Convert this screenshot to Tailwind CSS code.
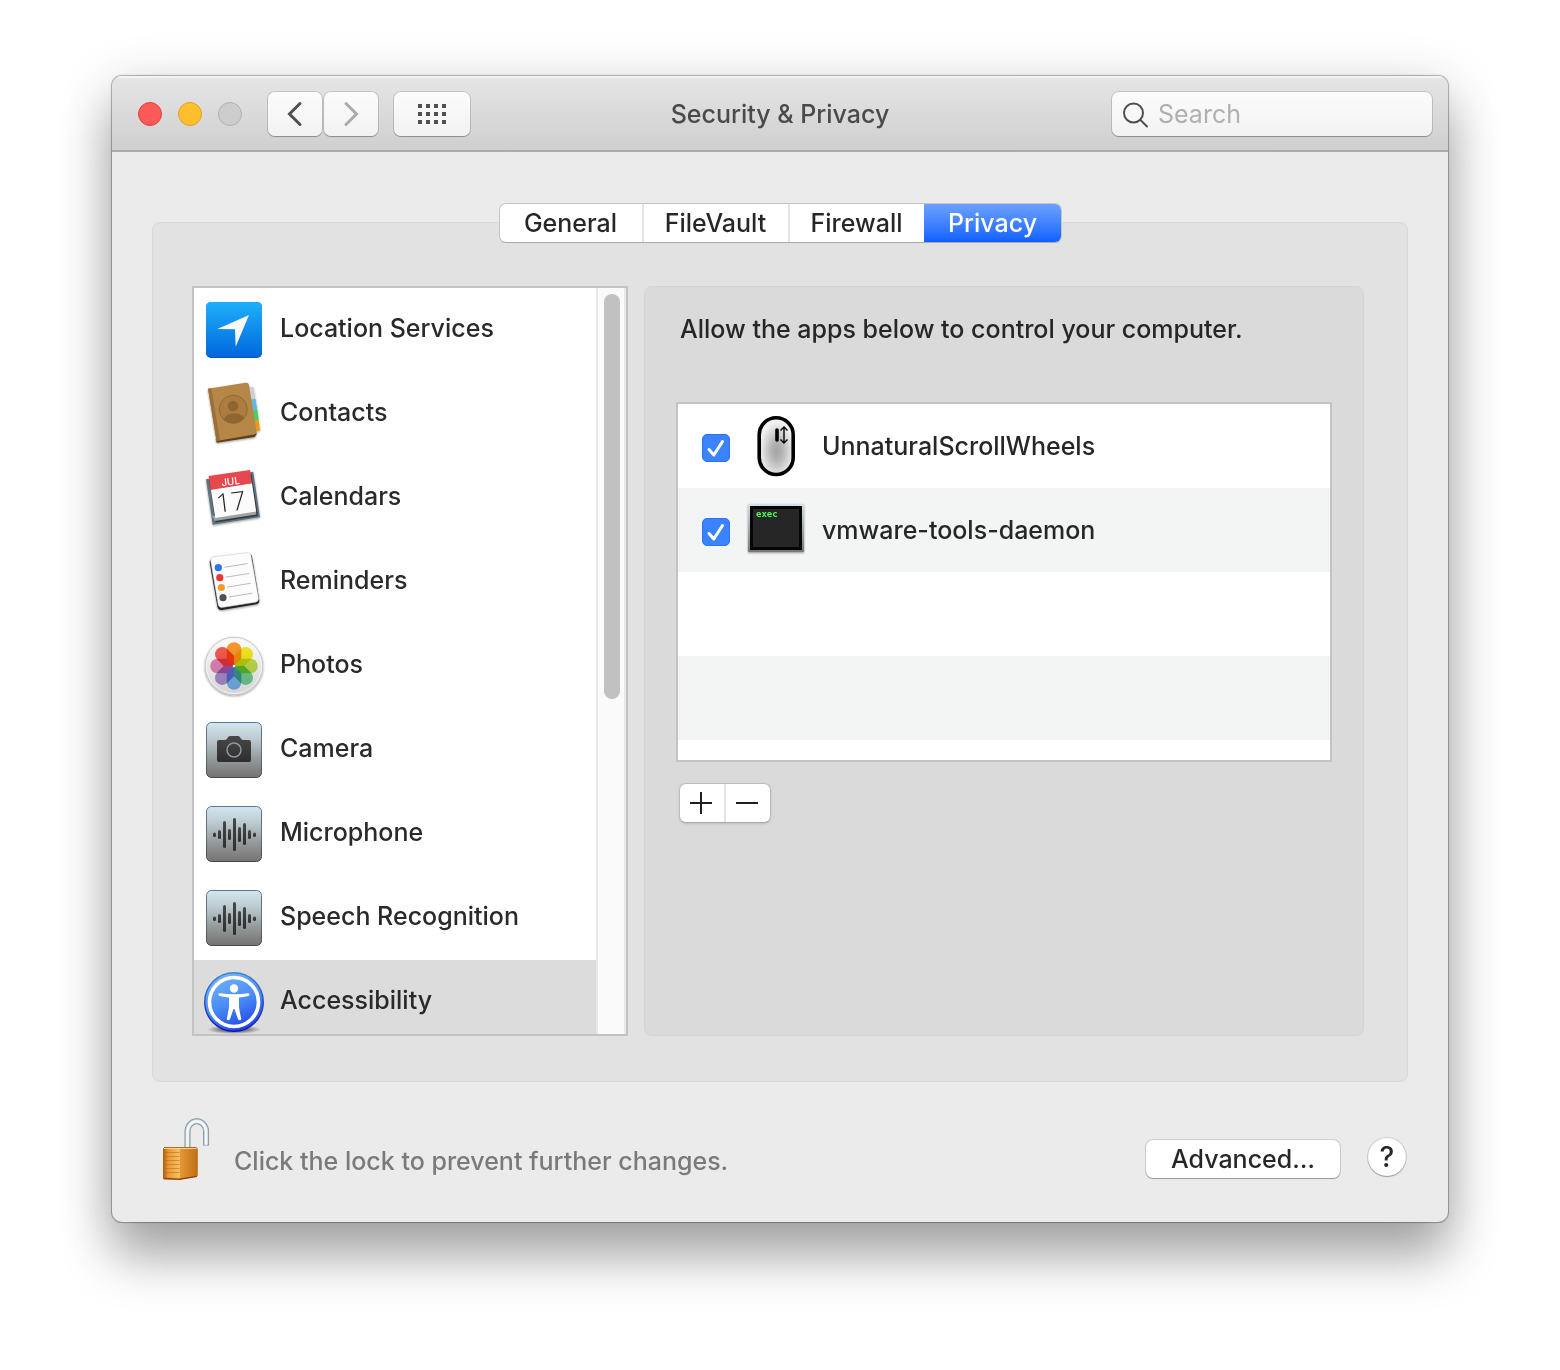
<!DOCTYPE html>
<html lang="en">
<head>
<meta charset="utf-8">
<meta name="viewport" content="width=device-width, initial-scale=1">
<title>Security &amp; Privacy</title>
<script src="https://cdn.jsdelivr.net/npm/@tailwindcss/browser@4"></script>
</head>
<body class="min-h-screen bg-white px-28 pt-[76px] pb-[148px] font-['Inter',sans-serif] text-[25px] leading-8 font-[450] text-[#262626]">

<!-- Gradients shared by several icons -->
<svg class="absolute size-0" aria-hidden="true">
  <defs>
    <linearGradient id="tile" x1="0" y1="0" x2="0" y2="1"><stop offset="0" stop-color="#d3e6ee"/><stop offset=".3" stop-color="#bccbd1"/><stop offset=".65" stop-color="#959b9d"/><stop offset="1" stop-color="#757373"/></linearGradient>
    <linearGradient id="tileEdge" x1="0" y1="0" x2="0" y2="1"><stop offset="0" stop-color="#56759b"/><stop offset=".5" stop-color="#667078"/><stop offset="1" stop-color="#484646"/></linearGradient>
    <linearGradient id="glyph" x1="0" y1="0" x2="0" y2="1"><stop offset="0" stop-color="#484848"/><stop offset="1" stop-color="#2e2e2e"/></linearGradient>
    <filter id="soft" x="-20%" y="-20%" width="140%" height="150%"><feDropShadow dx="0" dy="1" stdDeviation="1" flood-opacity=".4"/></filter>
    <path id="petal" d="M0 0-7.300-7.300V-16.500a7.300 7.300 0 0 1 14.600 0V-7.300z"/>
    <g id="wave">
      <rect x="2.500" y="2.500" width="55" height="55" rx="5" fill="url(#tile)" stroke="url(#tileEdge)"/>
      <g fill="url(#glyph)">
        <rect x="9" y="28.500" width="3" height="4.500" rx="1.500"/><rect x="14" y="26" width="3" height="9" rx="1.500"/><rect x="19" y="17" width="3" height="27" rx="1.500"/><rect x="24" y="25" width="3" height="11" rx="1.500"/><rect x="29" y="14" width="3" height="33" rx="1.500"/><rect x="34" y="23" width="3" height="15" rx="1.500"/><rect x="39" y="19" width="3" height="22" rx="1.500"/><rect x="44" y="26" width="3" height="9" rx="1.500"/><rect x="49" y="28.500" width="3" height="4.500" rx="1.500"/>
      </g>
    </g>
  </defs>
</svg>

<div class="overflow-hidden rounded-[10px] bg-[#ebebeb] shadow-[0_0_1px_1px_rgba(0,0,0,0.3),0_38px_50px_rgba(0,0,0,0.26),0_12px_56px_rgba(0,0,0,0.2)]">

  <header class="grid h-[76px] grid-cols-[1fr_auto_1fr] items-center border-b-2 border-[#ababab] bg-linear-to-b from-[#e6e6e6] to-[#cfcfcf] px-4 pt-0.5 shadow-[inset_0_2px_0_#f3f3f3]">
    <div class="flex items-center pl-2.5">
      <div class="flex gap-4">
        <button aria-label="Close" class="size-6 rounded-full border border-[#e0403f] bg-[#fd5956]"></button>
        <button aria-label="Minimize" class="size-6 rounded-full border border-[#e2a01f] bg-[#fdbf2e]"></button>
        <button aria-label="Zoom" disabled class="size-6 rounded-full border border-[#b0b0b0] bg-[#cdcdcd]"></button>
      </div>
      <div class="ml-[26px] flex gap-0.5">
        <button aria-label="Back" class="flex h-11 w-[54px] items-center justify-center rounded-[7px] bg-linear-to-b from-[#fcfcfc] to-[#f2f2f2] shadow-[0_0_0_1px_rgba(0,0,0,0.12),0_1px_1px_rgba(0,0,0,0.25)]">
          <svg class="h-7 w-4" viewBox="0 0 16 28" fill="none" stroke="#505050" stroke-width="3" stroke-linecap="round"><path d="M13 3.500 2.500 14 13 24.500"/></svg>
        </button>
        <button aria-label="Forward" disabled class="flex h-11 w-[54px] items-center justify-center rounded-[7px] bg-linear-to-b from-[#fcfcfc] to-[#f2f2f2] shadow-[0_0_0_1px_rgba(0,0,0,0.12),0_1px_1px_rgba(0,0,0,0.25)]">
          <svg class="h-7 w-4" viewBox="0 0 16 28" fill="none" stroke="#ababab" stroke-width="3" stroke-linecap="round"><path d="M3 3.500 13.500 14 3 24.500"/></svg>
        </button>
      </div>
      <button aria-label="Show all" class="ml-4 flex h-11 w-[76px] items-center justify-center rounded-[7px] bg-linear-to-b from-[#fcfcfc] to-[#f2f2f2] shadow-[0_0_0_1px_rgba(0,0,0,0.12),0_1px_1px_rgba(0,0,0,0.25)]">
        <svg class="h-5 w-7" viewBox="0 0 28 20" fill="none" stroke="#505050" stroke-width="4" stroke-dasharray="4 4"><path d="M0 2h28M0 10h28M0 18h28"/></svg>
      </button>
    </div>
    <h1 class="text-[#4a4a4a]">Security &amp; Privacy</h1>
    <label class="flex h-11 w-80 items-center gap-2 justify-self-end rounded-[7px] bg-linear-to-b from-[#fcfcfc] to-[#f2f2f2] pl-2.5 shadow-[0_0_0_1px_rgba(0,0,0,0.12),0_1px_1px_rgba(0,0,0,0.25)]">
      <svg class="size-7 shrink-0" viewBox="0 0 28 28" fill="none" stroke="#505050" stroke-width="2" stroke-linecap="round"><circle cx="11.500" cy="13" r="9.500"/><path d="m18.500 20 6.500 6.500"/></svg>
      <input type="search" aria-label="Search" placeholder="Search" class="min-w-0 flex-1 bg-transparent font-normal outline-none placeholder:text-[#b0b0b0]">
    </label>
  </header>

  <main class="px-10 pt-[51px]">
    <div role="tablist" class="relative mx-auto -mb-[21px] flex h-10 w-fit overflow-hidden rounded-[7px] border border-[#c4c4c4] border-b-[#a9a9a9] bg-white text-black/85">
      <button role="tab" class="w-[142px]">General</button>
      <button role="tab" class="w-[148px] border-x-2 border-[#e4e4e4]">FileVault</button>
      <button role="tab" class="w-[134px]">Firewall</button>
      <button role="tab" aria-selected="true" class="-my-px -mr-px w-[138px] bg-linear-to-b from-[#6ea2fd] to-[#0a5dff] text-white">Privacy</button>
    </div>

    <section class="flex gap-4 rounded-lg border border-[#d8d8d8] bg-[#e2e2e2] pt-[63px] pr-[43px] pb-[45px] pl-[39px]">

      <div class="flex h-[750px] w-[436px] shrink-0 overflow-hidden border-2 border-[#c3c3c3] bg-white text-[#2a2a2a]">
        <ul class="flex-1">
          <li><button class="flex h-[84px] w-full items-center gap-4 pl-2.5 text-left">
            <svg class="size-[60px]" viewBox="0 0 60 60">
              <defs><linearGradient id="loc" x1="0" y1="0" x2="0" y2="1"><stop offset="0" stop-color="#1fb0fa"/><stop offset="1" stop-color="#0067dc"/></linearGradient></defs>
              <rect x="2" y="2" width="56" height="56" rx="5" fill="#0a53b8"/><rect x="2" y="2" width="56" height="55" rx="5" fill="url(#loc)"/>
              <path d="M45 15 13.300 29l17.700.300.700 17.400z" fill="#f7f9fb"/>
            </svg>
            <span class="pb-1">Location Services</span></button></li>
          <li><button class="flex h-[84px] w-full items-center gap-4 pl-2.5 text-left">
            <svg class="size-[60px] overflow-visible" viewBox="0 0 60 60">
              <g filter="url(#soft)">
                <path d="M44 3h5.500l2 13-6 1z" fill="#cfcfcf"/><path d="m46 15.500 5.500-.8 1.800 11-6 1z" fill="#62b8e4"/><path d="m48 26.500 5.300-.8 1.500 10.500-5.500 1z" fill="#4fcb63"/><path d="m49 37 5.800-.8L56 46.500l-5 1z" fill="#e79c13"/>
                <path d="m12.700 58.700 38-5.700 2-3-1-3-40 8z" fill="#5d3f1b"/>
                <path d="M4 4.700 41.500-1.300q3-.300 3.500 2.300l7.500 46q.400 3-2.500 3.500L12.500 57z" fill="#b48748"/>
                <path d="m4 4.700 3.300-.5L16 56.500l-3.500.500z" fill="#9b7037"/>
              </g>
              <circle cx="29.300" cy="25.300" r="14" fill="#ab7d40" stroke="#936832"/>
              <circle cx="29" cy="22" r="5.300" fill="#8f6530"/><path d="M19.500 35.500q4-6.500 11-6.200 6.500.200 9.500 4.500-4.500 5.500-10.500 5.500-6 0-10-3.800z" fill="#8f6530"/>
            </svg>
            <span class="pb-1">Contacts</span></button></li>
          <li><button class="flex h-[84px] w-full items-center gap-4 pl-2.5 text-left">
            <svg class="size-[60px] overflow-visible" viewBox="0 0 60 60">
              <g filter="url(#soft)">
                <path d="M2 11.300 49.300 3.700 56 49.300 8.700 56.700z" fill="#5f7380"/>
                <path d="m5 12 6.500 42.500L54 48 47.500 6z" fill="#303a3f"/>
                <path d="m8 48 3 5 41.500-6.500-1-5z" fill="#9fa3a0"/>
                <path d="M6.700 21 48 15l4.200 28.500L11.300 50z" fill="#fbfbfb"/>
                <path d="M4.700 8 46 2l2 13.300L6.700 22z" fill="#e5484d"/>
              </g>
              <text x="27" y="17" text-anchor="middle" transform="rotate(-7 27 17)" font-size="10" fill="#fff">JUL</text>
              <text x="28" y="43" text-anchor="middle" transform="rotate(-7 28 43)" font-size="26" font-family="Open Sans, sans-serif" font-weight="300" fill="#222">17</text>
            </svg>
            <span class="pb-1">Calendars</span></button></li>
          <li><button class="flex h-[84px] w-full items-center gap-4 pl-2.5 text-left">
            <svg class="size-[60px] overflow-visible" viewBox="0 0 60 60">
              <g filter="url(#soft)">
                <path d="M9 6.500 44 1.700q3.500-.300 4 3l7.300 43.600q.300 3.200-3 4L18 58q-3.500.500-4.500-3L5.800 11q-.500-3.500 3.200-4.500z" fill="#222"/>
                <path d="M9.500 4.800 43.500.7q3-.200 3.500 2.800L54.500 46q.500 3.500-3 4.200L18 55.500q-3 .300-3.800-2.700L6.700 9q-.300-3.500 2.800-4.200z" fill="#fcfcfc" stroke="#ccc" stroke-width=".5"/>
              </g>
              <g stroke="#bdbdbd"><path d="m20.300 15.300 23.400-3.800M21.800 25.200l23.400-3.800M23.300 35.100l23.400-3.800M25 45l23.400-3.800"/></g>
              <circle cx="14.300" cy="15.700" r="3.600" fill="#2d72fb"/><circle cx="15.800" cy="25.700" r="3.600" fill="#ee3434"/><circle cx="17.300" cy="35.500" r="3.600" fill="#f49a2d"/><circle cx="19" cy="45.700" r="3.600" fill="#4a535c"/>
            </svg>
            <span class="pb-1">Reminders</span></button></li>
          <li><button class="flex h-[84px] w-full items-center gap-4 pl-2.5 text-left">
            <svg class="size-[60px] overflow-visible" viewBox="0 0 60 60">
              <defs><linearGradient id="disc" x1="0" y1="0" x2="0" y2="1"><stop offset="0" stop-color="#fdfdfd"/><stop offset="1" stop-color="#d4d4d4"/></linearGradient></defs>
              <circle cx="30" cy="30" r="28.800" fill="url(#disc)" stroke="#c8c8c8" filter="url(#soft)"/>
              <circle cx="30" cy="30" r="27.500" fill="none" stroke="#f4f4f4"/>
              <g transform="translate(30 30)">
                <use href="#petal" class="mix-blend-multiply" fill="#f99c2d"/>
                <use href="#petal" class="mix-blend-multiply" transform="rotate(45)" fill="#f8ea20"/>
                <use href="#petal" class="mix-blend-multiply" transform="rotate(90)" fill="#c0e04e"/>
                <use href="#petal" class="mix-blend-multiply" transform="rotate(135)" fill="#74d295"/>
                <use href="#petal" class="mix-blend-multiply" transform="rotate(180)" fill="#7ab8f2"/>
                <use href="#petal" class="mix-blend-multiply" transform="rotate(225)" fill="#ae92d6"/>
                <use href="#petal" class="mix-blend-multiply" transform="rotate(270)" fill="#e487bc"/>
                <use href="#petal" class="mix-blend-multiply" transform="rotate(315)" fill="#fa5c50"/>
                <circle r="1.300" fill="#fff"/>
              </g>
            </svg>
            <span class="pb-1">Photos</span></button></li>
          <li><button class="flex h-[84px] w-full items-center gap-4 pl-2.5 text-left">
            <svg class="size-[60px]" viewBox="0 0 60 60">
              <rect x="2.500" y="2.500" width="55" height="55" rx="5" fill="url(#tile)" stroke="url(#tileEdge)"/>
              <path d="M15 20h6q1.500 0 2.500-2 1-2 2.500-2h8q1.500 0 2.500 2t2.500 2h6q2 0 2 2v18q0 2-2 2H15q-2 0-2-2V22q0-2 2-2z" fill="url(#glyph)"/>
              <circle cx="30" cy="30" r="7" fill="none" stroke="#90999d" stroke-width="1.500"/>
            </svg>
            <span class="pb-1">Camera</span></button></li>
          <li><button class="flex h-[84px] w-full items-center gap-4 pl-2.5 text-left">
            <svg class="size-[60px]" viewBox="0 0 60 60"><use href="#wave"/></svg>
            <span class="pb-1">Microphone</span></button></li>
          <li><button class="flex h-[84px] w-full items-center gap-4 pl-2.5 text-left">
            <svg class="size-[60px]" viewBox="0 0 60 60"><use href="#wave"/></svg>
            <span class="pb-1">Speech Recognition</span></button></li>
          <li><button aria-current="true" class="flex h-[84px] w-full items-center gap-4 bg-[#dcdcdc] pl-2.5 text-left">
            <svg class="size-[60px] overflow-visible" viewBox="0 0 60 60">
              <defs><linearGradient id="acc" x1=".3" y1="0" x2=".7" y2="1"><stop offset="0" stop-color="#72b6fb"/><stop offset=".5" stop-color="#4a8cf6"/><stop offset="1" stop-color="#1c3fe4"/></linearGradient>
              <linearGradient id="accEdge" x1="0" y1="0" x2="0" y2="1"><stop offset="0" stop-color="#3f88c8"/><stop offset="1" stop-color="#1212b8"/></linearGradient>
              <radialGradient id="accShade"><stop offset=".5" stop-color="#555" stop-opacity=".7"/><stop offset="1" stop-color="#555" stop-opacity="0"/></radialGradient></defs>
              <ellipse cx="30" cy="57.500" rx="27" ry="4.500" fill="url(#accShade)"/>
              <circle cx="30" cy="30" r="29.300" fill="url(#acc)" stroke="url(#accEdge)" stroke-width="1.400"/>
              <circle cx="30" cy="30" r="24.500" fill="none" stroke="#fff" stroke-width="3.600"/>
              <circle cx="30" cy="16.500" r="4.200" fill="#fff"/>
              <path d="M16 21.200q14 2 28 0 1.500 0 1.500 1.300T44.200 24q-5 1-9.200 1.500v8.500q0 3 2.200 12.500.200 1.500-1.200 1.800t-2-1.300L30.500 37h-1L26 47q-.600 1.600-2 1.300t-1.200-1.800Q25 37 25 34v-8.500Q20.800 25 15.800 24q-1.300-.300-1.300-1.500T16 21.200z" fill="#fff"/>
            </svg>
            <span class="pb-1">Accessibility</span></button></li>
        </ul>
        <div class="w-[30px] border-x-2 border-[#e8e8e8] bg-[#fafafa] py-1.5 pl-1.5">
          <div class="h-[405px] w-4 rounded-full bg-[#c1c1c1]"></div>
        </div>
      </div>

      <div class="min-w-0 flex-1 rounded-lg border border-[#d4d4d4] bg-[#dadada] px-[31px] pt-[26px]">
        <p class="pl-1">Allow the apps below to control your computer.</p>
        <div class="mt-[57px] h-[360px] overflow-hidden border-2 border-[#c3c3c3] bg-white">
          <table class="w-full border-collapse" aria-label="Allowed apps">
            <tbody>
              <tr class="h-[84px]">
                <td class="w-[52px] p-0 pl-6"><input id="app-scroll" type="checkbox" checked class="peer sr-only"><label for="app-scroll" aria-label="Allow UnnaturalScrollWheels" class="mt-1 flex size-7 items-center justify-center rounded-[5px] border border-[#2f72f5] bg-[#3b82fd]"><svg class="size-6" viewBox="0 0 24 24" fill="none" stroke="#fff" stroke-width="3" stroke-linecap="round" stroke-linejoin="round"><path d="m5 13.500 4.800 5.500L18.500 5.500"/></svg></label></td>
                <td class="w-[92px] p-0 pl-4">
                  <svg class="size-[60px] overflow-visible" viewBox="0 0 60 60">
                    <defs><radialGradient id="mouse" cx=".52" cy=".58" r=".5"><stop offset="0" stop-color="#a4a4a4"/><stop offset=".35" stop-color="#b5b5b5"/><stop offset="1" stop-color="#f1f1f1"/></radialGradient></defs>
                    <rect x="13.200" y="1.800" width="34" height="56.700" rx="17" fill="url(#mouse)" stroke="#000" stroke-width="3.600"/>
                    <path d="M31 14v10" stroke="#000" stroke-width="3.600" stroke-linecap="round"/>
                    <path d="M38 11.500v15m-3.500-12L38 11l3.500 3.500m-7 9L38 27l3.500-3.500" fill="none" stroke="#000" stroke-width="1.400"/>
                  </svg></td>
                <td class="p-0">UnnaturalScrollWheels</td>
              </tr>
              <tr class="h-[84px] bg-[#f3f5f4]">
                <td class="p-0 pl-6"><input id="app-vmware" type="checkbox" checked class="peer sr-only"><label for="app-vmware" aria-label="Allow vmware-tools-daemon" class="mt-1 flex size-7 items-center justify-center rounded-[5px] border border-[#2f72f5] bg-[#3b82fd]"><svg class="size-6" viewBox="0 0 24 24" fill="none" stroke="#fff" stroke-width="3" stroke-linecap="round" stroke-linejoin="round"><path d="m5 13.500 4.800 5.500L18.500 5.500"/></svg></label></td>
                <td class="p-0 pl-4">
                  <svg class="size-[60px] overflow-visible" viewBox="0 0 60 60">
                    <defs><linearGradient id="term" x1="0" y1="0" x2="0" y2="1"><stop offset="0" stop-color="#cfe3ea"/><stop offset="1" stop-color="#777"/></linearGradient></defs>
                    <rect x="2" y="4" width="56" height="48" rx="1" fill="url(#term)" filter="url(#soft)"/>
                    <path d="M4 6h52v44H4z" fill="#060606"/><path d="M7 9h46v38H7z" fill="#262626"/>
                    <text x="10" y="17" font-family="DejaVu Sans Mono, monospace" font-size="9" font-weight="700" fill="#4dfb55">exec</text>
                  </svg></td>
                <td class="p-0">vmware-tools-daemon</td>
              </tr>
              <tr class="h-[84px]"><td colspan="3"></td></tr>
              <tr class="h-[84px] bg-[#f3f5f4]"><td colspan="3"></td></tr>
            </tbody>
          </table>
        </div>
        <div class="mt-[21px] ml-[3px] flex h-10 w-fit overflow-hidden rounded-[7px] border border-[#bdbdbd] border-b-[#a9a9a9] bg-white shadow-sm">
          <button aria-label="Add" class="flex w-11 items-center justify-center"><svg class="size-6" viewBox="0 0 24 24" stroke="#1f1f1f" stroke-width="2"><path d="M0 12h22M11 1v22"/></svg></button>
          <button aria-label="Remove" class="flex w-[46px] items-center justify-center border-l-2 border-[#e4e4e4]"><svg class="size-6" viewBox="0 0 24 24" stroke="#1f1f1f" stroke-width="2"><path d="M0 12h22"/></svg></button>
        </div>
      </div>
    </section>
  </main>

  <footer class="flex items-start pt-9 pr-[42px] pb-10 pl-[50px]">
    <button aria-label="Lock">
      <svg class="h-16 w-12" viewBox="0 0 48 64">
        <defs>
          <linearGradient id="brassL" x1="0" y1="0" x2="1" y2="0"><stop offset="0" stop-color="#a85a10"/><stop offset=".3" stop-color="#e8952f"/><stop offset="1" stop-color="#fbc263"/></linearGradient>
          <linearGradient id="brassR" x1="0" y1="0" x2="1" y2="0"><stop offset="0" stop-color="#e89a36"/><stop offset="1" stop-color="#bd6f14"/></linearGradient>
        </defs>
        <path d="M25.500 31V13.500a9.300 10.200 0 0 1 18.600 0v14" fill="none" stroke="#82929b" stroke-width="6"/>
        <path d="M25.500 31V13.500a9.300 10.200 0 0 1 18.600 0v13.200" fill="none" stroke="#b9c8cf" stroke-width="4.400"/>
        <path d="M25.500 31V13.500a9.300 10.200 0 0 1 18.600 0v13.200" fill="none" stroke="#f4f9fa" stroke-width="2.600"/>
        <path d="M1 31q0-1.500 2-1.500h14.500v32.200L3 61.200q-2 0-2-1.500z" fill="url(#brassL)"/>
        <path d="M17.500 29.500H34q1.800 0 1.800 1.500v26q0 1.500-1.800 1.800l-16.500 2.900z" fill="url(#brassR)"/>
        <path d="M1 34.500h16.500M1 38.500h16.500M1 42.500h16.500M1 46.500h16.500M1 50.500h16.500M1 54.500h16.500" stroke="#b8691a" opacity=".55"/>
        <path d="M2 30.500h32.500" stroke="#ffd58c"/>
        <path d="M2 29.500h32.500" stroke="#8e5516" stroke-width=".8"/>
        <path d="m1.500 60.500 16 .7 17.500-2.800" fill="none" stroke="#8f450c" stroke-width="1.400"/>
      </svg>
    </button>
    <p class="mt-[27px] ml-6 text-[#7a7a7a]">Click the lock to prevent further changes.</p>
    <button class="mt-[22px] ml-auto flex h-[38px] w-[194px] items-center justify-center rounded-[7px] bg-white text-black/85 shadow-[0_0_0_1px_rgba(0,0,0,0.12),0_1px_1px_rgba(0,0,0,0.25)]">Advanced…</button>
    <button aria-label="Help" class="mt-5 ml-7 flex size-[38px] items-center justify-center rounded-full bg-white text-[28px] text-black/85 shadow-[0_0_0_1px_rgba(0,0,0,0.12),0_1px_1px_rgba(0,0,0,0.25)]">?</button>
  </footer>
</div>
</body>
</html>
